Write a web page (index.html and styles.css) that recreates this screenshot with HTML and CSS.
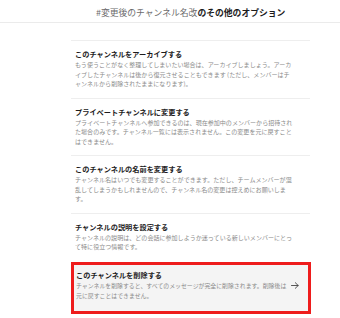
FILE: index.html
```html
<!DOCTYPE html>
<html lang="ja">
<head>
<meta charset="utf-8">
<title>その他のオプション</title>
<link rel="stylesheet" href="styles.css">
</head>
<body>
<header class="header"><span class="header-channel">#変更後のチャンネル名改</span><span class="header-strong">のその他のオプション</span></header>
<ul class="options">
  <li class="option">
    <div class="option-text">
      <div class="option-title">このチャンネルをアーカイブする</div>
      <div class="option-desc">もう使うことがなく整理してしまいたい場合は、アーカイブしましょう。アーカ<br>イブしたチャンネルは後から復元させることもできます (ただし、メンバーはチ<br>ャンネルから削除されたままになります)。</div>
    </div>
  </li>
  <li class="option">
    <div class="option-text">
      <div class="option-title">プライベートチャンネルに変更する</div>
      <div class="option-desc">プライベートチャンネルへ参加できるのは、現在参加中のメンバーから招待され<br>た場合のみです。チャンネル一覧には表示されません。この変更を元に戻すこと<br>はできません。</div>
    </div>
  </li>
  <li class="option">
    <div class="option-text">
      <div class="option-title">このチャンネルの名前を変更する</div>
      <div class="option-desc">チャンネル名はいつでも変更することができます。ただし、チームメンバーが混<br>乱してしまうかもしれませんので、チャンネル名の変更は控えめにお願いしま<br>す。</div>
    </div>
  </li>
  <li class="option">
    <div class="option-text">
      <div class="option-title">チャンネルの説明を設定する</div>
      <div class="option-desc">チャンネルの説明は、どの会話に参加しようか迷っている新しいメンバーにとっ<br>て特に役立つ情報です。</div>
    </div>
  </li>
  <li class="option option--highlight">
    <div class="option-text">
      <div class="option-title">このチャンネルを削除する</div>
      <div class="option-desc">チャンネルを削除すると、すべてのメッセージが完全に削除されます。削除後は<br>元に戻すことはできません。</div>
    </div>
    <svg class="option-arrow" width="8" height="7" viewBox="0 0 8 7" aria-hidden="true">
      <path d="M0.5 3.5 H7.2 M4.3 0.7 L7.2 3.5 L4.3 6.3" fill="none" stroke="#444" stroke-width="0.9" stroke-linecap="round" stroke-linejoin="round"/>
    </svg>
  </li>
</ul>
</body>
</html>
```

FILE: styles.css
```css
html, body {
  margin: 0;
  padding: 0;
  background: #ffffff;
}

body {
  font-family: "Noto Sans CJK JP", "Noto Sans", sans-serif;
  color: #1d1c1d;
}

.header {
  box-sizing: border-box;
  height: 23px;
  padding: 3px 0 0 96px;
  border-bottom: 1px solid #ebebeb;
  display: flex;
  align-items: center;
  font-size: 8.8px;
  line-height: 12px;
  white-space: nowrap;
}

.header-channel {
  color: #6b6a6b;
}

.header-strong {
  color: #1d1c1d;
  font-weight: 700;
}

.options {
  list-style: none;
  margin: 17px 0 0 71px;
  padding: 0;
  width: 239px;
}

.option {
  border-top: 1px solid #eeeeee;
  padding: 8px 4px 9px 4px;
}

.option-title {
  font-size: 7.2px;
  line-height: 10px;
  font-weight: 700;
  color: #1d1c1d;
  white-space: nowrap;
}

.option-desc {
  margin-top: 1px;
  font-size: 6.05px;
  line-height: 9.5px;
  color: #8a8a8a;
  white-space: nowrap;
}

.option--highlight {
  margin-top: 1.5px;
  margin-right: -1px;
  border: 3px solid #ee1c1c;
  background: #f4f4f4;
  padding: 5px 9px 11px 2px;
  display: flex;
  align-items: center;
}

.option--highlight .option-text {
  flex: 1;
}

.option--highlight .option-desc {
  font-size: 5.9px;
}

.option-arrow {
  flex: none;
  display: block;
}
```
